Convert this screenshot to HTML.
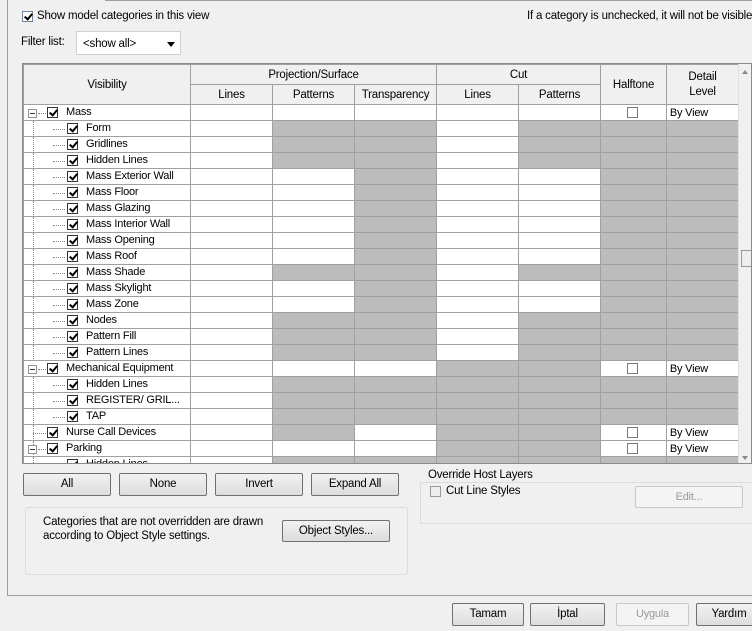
<!DOCTYPE html>
<html><head><meta charset="utf-8"><style>
*{box-sizing:border-box;margin:0;padding:0}
body{width:752px;height:631px;background:#f0f0f0;font-family:"Liberation Sans",sans-serif;font-size:11px;letter-spacing:-0.2px;color:#000;position:relative;overflow:hidden}
.abs{position:absolute;white-space:nowrap}
.cb{position:absolute;width:11px;height:11px;border:1px solid #333;background:#fff}
.cb.k::after{content:"";position:absolute;left:3px;top:0px;width:3px;height:6px;border:solid #000;border-width:0 2px 2px 0;transform:rotate(40deg)}
.hc{position:absolute;width:11px;height:11px;border:1px solid #777;background:#fff}
table{border-collapse:collapse;table-layout:fixed}
td{height:16px;border:1px solid #a0a0a0;padding:0;position:relative;white-space:nowrap;overflow:hidden;font-size:11px;line-height:14px}
td.h{background:repeating-conic-gradient(#7a7a7a 0 25%,#fff 0 50%) 0 0/2px 2px}
.grid{position:absolute;left:22px;top:63px;width:730px;height:401px;border:1px solid #8a8a8a;background:#fff;overflow:hidden}
.hdr td{background:#f0f0f0;text-align:center;height:20px;border-color:#a0a0a0;font-size:11.5px}
.btn{position:absolute;height:23px;border:1px solid #707070;border-radius:2px;background:linear-gradient(#f2f2f2,#dcdcdc);text-align:center;line-height:21px;font-size:11.5px}
.lab{position:absolute;top:0}
.dl{position:absolute;border-top:1px dotted #888;height:0}
.vl{position:absolute;border-left:1px dotted #888;width:0}
.mb{position:absolute;width:9px;height:9px;border:1px solid #919191;background:#fff}
.mb::after{content:"";position:absolute;left:1px;top:3px;width:5px;height:1px;background:#333}
</style></head><body>
<div class="abs" style="left:7px;top:0;width:1px;height:596px;background:#a0a0a0"></div>
<div class="abs" style="left:7px;top:595px;width:745px;height:1px;background:#a0a0a0"></div>
<div class="abs" style="left:105px;top:0;width:647px;height:1px;background:#a0a0a0"></div>
<div class="cb k" style="left:22px;top:11px;border-color:#6a86a8"></div>
<div class="abs" style="left:37px;top:10px;font-size:11.5px">Show model categories in this view</div>
<div class="abs" style="left:527px;top:10px;font-size:11.5px">If a category is unchecked, it will not be visible.</div>
<div class="abs" style="left:21px;top:36px;font-size:11.5px">Filter list:</div>
<div class="abs" style="left:76px;top:31px;width:105px;height:24px;border:1px solid #d0d0d0;background:#fff;padding:6px 0 0 6px;font-size:11.5px">&lt;show all&gt;<span style="position:absolute;right:5px;top:10px;border:4px solid transparent;border-top:5px solid #000"></span></div>

<div class="grid">
<table style="width:715px">
<colgroup><col style="width:167px"><col style="width:82px"><col style="width:82px"><col style="width:82px"><col style="width:82px"><col style="width:82px"><col style="width:66px"><col style="width:72px"></colgroup>
<tr class="hdr"><td rowspan="2" style="height:40px">Visibility</td><td colspan="3">Projection/Surface</td><td colspan="2">Cut</td><td rowspan="2">Halftone</td><td rowspan="2" style="line-height:15px">Detail<br>Level</td></tr>
<tr class="hdr"><td>Lines</td><td>Patterns</td><td>Transparency</td><td>Lines</td><td>Patterns</td></tr>
</table>
<div style="position:absolute;left:0;top:40px;width:715px;height:360px;overflow:hidden">
<table style="width:715px">
<colgroup><col style="width:167px"><col style="width:82px"><col style="width:82px"><col style="width:82px"><col style="width:82px"><col style="width:82px"><col style="width:66px"><col style="width:72px"></colgroup>
<tr><td><div class="mb" style="left:4px;top:4px"></div><div class="dl" style="left:14px;top:8px;width:8px"></div><div class="cb k" style="left:23px;top:2px"></div><span class="lab" style="left:42px">Mass</span></td><td></td><td></td><td></td><td></td><td></td><td><div class="hc" style="left:26px;top:2px"></div></td><td>&nbsp;By View</td></tr>
<tr><td><div class="vl" style="left:9px;top:0;height:16px"></div><div class="dl" style="left:29px;top:8px;width:12px"></div><div class="cb k" style="left:43px;top:2px"></div><span class="lab" style="left:62px">Form</span></td><td></td><td class="h"></td><td class="h"></td><td></td><td class="h"></td><td class="h"></td><td class="h"></td></tr>
<tr><td><div class="vl" style="left:9px;top:0;height:16px"></div><div class="dl" style="left:29px;top:8px;width:12px"></div><div class="cb k" style="left:43px;top:2px"></div><span class="lab" style="left:62px">Gridlines</span></td><td></td><td class="h"></td><td class="h"></td><td></td><td class="h"></td><td class="h"></td><td class="h"></td></tr>
<tr><td><div class="vl" style="left:9px;top:0;height:16px"></div><div class="dl" style="left:29px;top:8px;width:12px"></div><div class="cb k" style="left:43px;top:2px"></div><span class="lab" style="left:62px">Hidden Lines</span></td><td></td><td class="h"></td><td class="h"></td><td></td><td class="h"></td><td class="h"></td><td class="h"></td></tr>
<tr><td><div class="vl" style="left:9px;top:0;height:16px"></div><div class="dl" style="left:29px;top:8px;width:12px"></div><div class="cb k" style="left:43px;top:2px"></div><span class="lab" style="left:62px">Mass Exterior Wall</span></td><td></td><td></td><td class="h"></td><td></td><td></td><td class="h"></td><td class="h"></td></tr>
<tr><td><div class="vl" style="left:9px;top:0;height:16px"></div><div class="dl" style="left:29px;top:8px;width:12px"></div><div class="cb k" style="left:43px;top:2px"></div><span class="lab" style="left:62px">Mass Floor</span></td><td></td><td></td><td class="h"></td><td></td><td></td><td class="h"></td><td class="h"></td></tr>
<tr><td><div class="vl" style="left:9px;top:0;height:16px"></div><div class="dl" style="left:29px;top:8px;width:12px"></div><div class="cb k" style="left:43px;top:2px"></div><span class="lab" style="left:62px">Mass Glazing</span></td><td></td><td></td><td class="h"></td><td></td><td></td><td class="h"></td><td class="h"></td></tr>
<tr><td><div class="vl" style="left:9px;top:0;height:16px"></div><div class="dl" style="left:29px;top:8px;width:12px"></div><div class="cb k" style="left:43px;top:2px"></div><span class="lab" style="left:62px">Mass Interior Wall</span></td><td></td><td></td><td class="h"></td><td></td><td></td><td class="h"></td><td class="h"></td></tr>
<tr><td><div class="vl" style="left:9px;top:0;height:16px"></div><div class="dl" style="left:29px;top:8px;width:12px"></div><div class="cb k" style="left:43px;top:2px"></div><span class="lab" style="left:62px">Mass Opening</span></td><td></td><td></td><td class="h"></td><td></td><td></td><td class="h"></td><td class="h"></td></tr>
<tr><td><div class="vl" style="left:9px;top:0;height:16px"></div><div class="dl" style="left:29px;top:8px;width:12px"></div><div class="cb k" style="left:43px;top:2px"></div><span class="lab" style="left:62px">Mass Roof</span></td><td></td><td></td><td class="h"></td><td></td><td></td><td class="h"></td><td class="h"></td></tr>
<tr><td><div class="vl" style="left:9px;top:0;height:16px"></div><div class="dl" style="left:29px;top:8px;width:12px"></div><div class="cb k" style="left:43px;top:2px"></div><span class="lab" style="left:62px">Mass Shade</span></td><td></td><td class="h"></td><td class="h"></td><td></td><td class="h"></td><td class="h"></td><td class="h"></td></tr>
<tr><td><div class="vl" style="left:9px;top:0;height:16px"></div><div class="dl" style="left:29px;top:8px;width:12px"></div><div class="cb k" style="left:43px;top:2px"></div><span class="lab" style="left:62px">Mass Skylight</span></td><td></td><td></td><td class="h"></td><td></td><td></td><td class="h"></td><td class="h"></td></tr>
<tr><td><div class="vl" style="left:9px;top:0;height:16px"></div><div class="dl" style="left:29px;top:8px;width:12px"></div><div class="cb k" style="left:43px;top:2px"></div><span class="lab" style="left:62px">Mass Zone</span></td><td></td><td></td><td class="h"></td><td></td><td></td><td class="h"></td><td class="h"></td></tr>
<tr><td><div class="vl" style="left:9px;top:0;height:16px"></div><div class="dl" style="left:29px;top:8px;width:12px"></div><div class="cb k" style="left:43px;top:2px"></div><span class="lab" style="left:62px">Nodes</span></td><td></td><td class="h"></td><td class="h"></td><td></td><td class="h"></td><td class="h"></td><td class="h"></td></tr>
<tr><td><div class="vl" style="left:9px;top:0;height:16px"></div><div class="dl" style="left:29px;top:8px;width:12px"></div><div class="cb k" style="left:43px;top:2px"></div><span class="lab" style="left:62px">Pattern Fill</span></td><td></td><td class="h"></td><td class="h"></td><td></td><td class="h"></td><td class="h"></td><td class="h"></td></tr>
<tr><td><div class="vl" style="left:9px;top:0;height:16px"></div><div class="dl" style="left:29px;top:8px;width:12px"></div><div class="cb k" style="left:43px;top:2px"></div><span class="lab" style="left:62px">Pattern Lines</span></td><td></td><td class="h"></td><td class="h"></td><td></td><td class="h"></td><td class="h"></td><td class="h"></td></tr>
<tr><td><div class="mb" style="left:4px;top:4px"></div><div class="dl" style="left:14px;top:8px;width:8px"></div><div class="cb k" style="left:23px;top:2px"></div><span class="lab" style="left:42px">Mechanical Equipment</span></td><td></td><td></td><td></td><td class="h"></td><td class="h"></td><td><div class="hc" style="left:26px;top:2px"></div></td><td>&nbsp;By View</td></tr>
<tr><td><div class="vl" style="left:9px;top:0;height:16px"></div><div class="dl" style="left:29px;top:8px;width:12px"></div><div class="cb k" style="left:43px;top:2px"></div><span class="lab" style="left:62px">Hidden Lines</span></td><td></td><td class="h"></td><td class="h"></td><td class="h"></td><td class="h"></td><td class="h"></td><td class="h"></td></tr>
<tr><td><div class="vl" style="left:9px;top:0;height:16px"></div><div class="dl" style="left:29px;top:8px;width:12px"></div><div class="cb k" style="left:43px;top:2px"></div><span class="lab" style="left:62px">REGISTER/ GRIL...</span></td><td></td><td class="h"></td><td class="h"></td><td class="h"></td><td class="h"></td><td class="h"></td><td class="h"></td></tr>
<tr><td><div class="vl" style="left:9px;top:0;height:16px"></div><div class="dl" style="left:29px;top:8px;width:12px"></div><div class="cb k" style="left:43px;top:2px"></div><span class="lab" style="left:62px">TAP</span></td><td></td><td class="h"></td><td class="h"></td><td class="h"></td><td class="h"></td><td class="h"></td><td class="h"></td></tr>
<tr><td><div class="vl" style="left:9px;top:0;height:16px"></div><div class="dl" style="left:9px;top:8px;width:13px"></div><div class="cb k" style="left:23px;top:2px"></div><span class="lab" style="left:42px">Nurse Call Devices</span></td><td></td><td class="h"></td><td></td><td class="h"></td><td class="h"></td><td><div class="hc" style="left:26px;top:2px"></div></td><td>&nbsp;By View</td></tr>
<tr><td><div class="vl" style="left:9px;top:0;height:16px"></div><div class="mb" style="left:4px;top:4px"></div><div class="dl" style="left:14px;top:8px;width:8px"></div><div class="cb k" style="left:23px;top:2px"></div><span class="lab" style="left:42px">Parking</span></td><td></td><td></td><td></td><td class="h"></td><td class="h"></td><td><div class="hc" style="left:26px;top:2px"></div></td><td>&nbsp;By View</td></tr>
<tr><td><div class="vl" style="left:9px;top:0;height:16px"></div><div class="dl" style="left:29px;top:8px;width:12px"></div><div class="cb k" style="left:43px;top:2px"></div><span class="lab" style="left:62px">Hidden Lines</span></td><td></td><td class="h"></td><td class="h"></td><td class="h"></td><td class="h"></td><td class="h"></td><td class="h"></td></tr>
</table></div>
<div class="abs" style="left:715px;top:0;width:15px;height:400px;background:#f0f0f0;border-left:1px solid #e0e0e0"></div>
<div class="abs" style="left:719px;top:6px;border:3px solid transparent;border-bottom:4px solid #888;border-top:0"></div>
<div class="abs" style="left:718px;top:186px;width:11px;height:17px;border:1px solid #999;background:#eee"></div>
<div class="abs" style="left:719px;top:392px;border:3px solid transparent;border-top:4px solid #888;border-bottom:0"></div>
</div>

<div class="btn" style="left:23px;top:473px;width:88px">All</div>
<div class="btn" style="left:119px;top:473px;width:88px">None</div>
<div class="btn" style="left:215px;top:473px;width:88px">Invert</div>
<div class="btn" style="left:311px;top:473px;width:88px">Expand All</div>
<div class="abs" style="left:25px;top:507px;width:383px;height:68px;border:1px solid #dcdcdc;border-radius:3px"></div>
<div class="abs" style="left:43px;top:515px;line-height:14px;font-size:11.5px">Categories that are not overridden are drawn<br>according to Object Style settings.</div>
<div class="btn" style="left:282px;top:520px;width:108px;height:22px;line-height:20px">Object Styles...</div>
<div class="abs" style="left:420px;top:482px;width:332px;height:42px;border:1px solid #dcdcdc;border-right:0"></div>
<div class="abs" style="left:426px;top:469px;background:#f0f0f0;padding:0 2px;font-size:11.5px">Override Host Layers</div>
<div class="cb" style="left:430px;top:486px;border-color:#999;background:#eee"></div>
<div class="abs" style="left:446px;top:485px;font-size:11.5px">Cut Line Styles</div>
<div class="abs" style="left:635px;top:486px;width:108px;height:22px;border:1px solid #c8c8c8;border-radius:2px;background:#f4f4f4;color:#999;text-align:center;line-height:20px">Edit...</div>

<div class="btn" style="left:452px;top:603px;width:72px">Tamam</div>
<div class="btn" style="left:530px;top:603px;width:75px">İptal</div>
<div class="abs" style="left:616px;top:603px;width:73px;height:23px;border:1px solid #c8c8c8;border-radius:2px;background:#f4f4f4;color:#999;text-align:center;line-height:21px">Uygula</div>
<div class="btn" style="left:696px;top:603px;width:66px">Yardım</div>
</body></html>
